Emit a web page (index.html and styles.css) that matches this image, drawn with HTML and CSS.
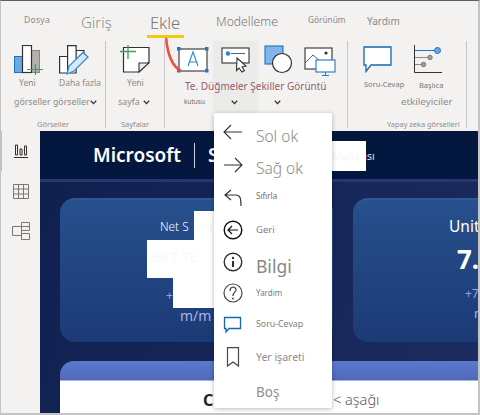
FILE: index.html
```html
<!DOCTYPE html>
<html lang="tr">
<head>
<meta charset="utf-8">
<title>Ekle</title>
<link rel="stylesheet" href="styles.css">
</head>
<body>
<div class="app">
  <nav class="tabs">
    <span class="tab tab-file">Dosya</span>
    <span class="tab tab-home">Giriş</span>
    <span class="tab tab-insert">Ekle</span>
    <span class="tab tab-model">Modelleme</span>
    <span class="tab tab-view">Görünüm</span>
    <span class="tab tab-help">Yardım</span>
  </nav>

  <section class="ribbon">
    <div class="group g-visuals">
      <div class="cmds">
        <div class="cmd c-new">
          <svg class="ic" width="32" height="31" viewBox="0 0 32 31"><rect x="17.500" y="5.500" width="8" height="22" fill="#b3b1af" stroke="#8a8886"/><rect x=".5" y="11.500" width="8" height="16" fill="#69a9e6" stroke="#1c72bd"/><rect x="8.500" y=".5" width="9" height="27" fill="#fff" stroke="#323130" stroke-width="1.200"/><path d="M13 24.500h16M21.500 19v11" stroke="#3f9b57" stroke-width="1.200" fill="none"/></svg>
          <span class="lb l-yeni">Yeni</span>
        </div>
        <div class="cmd c-more">
          <svg class="ic" width="30" height="31" viewBox="0 0 30 31"><path d="M.6 11.500h8v16.500h-8zM8.600 28V.6h8.500V28zM17 5.500h8v8" fill="#fff" stroke="#323130" stroke-width="1.200"/><path d="M8 29l2-8L24 7.500l5 4.500L15 26z" fill="#d5e7f8" stroke="#2e8fd6" stroke-width="1.300"/></svg>
          <span class="lb l-more">Daha fazla</span>
        </div>
      </div>
      <div class="lb l-vis">görseller görseller<svg class="chev" width="7" height="5" viewBox="0 0 7 5"><path d="M.8.8l2.7 2.8L6.200.8" fill="none" stroke="#323130" stroke-width="1.300"/></svg></div>
      <div class="gname">Görseller</div>
    </div>

    <div class="group g-pages">
      <svg class="ic" width="30" height="28" viewBox="0 0 30 28"><path d="M3.500 2.500H29V17L19 27H3.500z" fill="#fff" stroke="#323130" stroke-width="1.200"/><path d="M19 27v-9h10z" fill="#edebe9" stroke="#323130" stroke-width="1.100"/><path d="M0 6.500h16M8 0v14" stroke="#3f9b57" stroke-width="1.300"/></svg>
      <span class="lb l-yeni2">Yeni</span>
      <span class="lb l-page">sayfa<svg class="chev" width="7" height="5" viewBox="0 0 7 5"><path d="M.8.8l2.700 2.800L6.200.8" fill="none" stroke="#323130" stroke-width="1.300"/></svg></span>
      <div class="gname">Sayfalar</div>
    </div>

    <div class="group g-shapes">
      <div class="hover-cell"></div>
      <div class="shape-icons">
        <svg class="ic" width="32" height="26" viewBox="0 0 32 26"><rect x="2" y="2" width="28" height="22" fill="#fff" stroke="#323130" stroke-width="1.100"/><path d="M11 19l5-14 5 14M12.500 15h7" fill="none" stroke="#2f86d1" stroke-width="1.100"/><path d="M0 0h3.500v3.500H0zM28 0h3.500v3.500H28zM0 22h3.500v3.500H0zM28 22h3.500v3.500H28z" fill="#1c78c8"/></svg>
        <svg class="ic ic-btn" width="30" height="26" viewBox="0 0 30 26"><rect x="1" y="1" width="27" height="15" fill="#fff" stroke="#323130" stroke-width="1.100"/><circle cx="7" cy="6.500" r="2.300" fill="#2f86d1"/><path d="M10 6.500h14" stroke="#605e5c"/><path d="M16 11l9 8-4 1 2.500 3.500-2.500 1.500-3-4-2.500 2.500z" fill="#fff" stroke="#323130" stroke-width="1.100"/></svg>
        <svg class="ic ic-shape" width="30" height="30" viewBox="0 0 30 30"><rect x="1" y="1" width="18" height="18" fill="#7fb7ec" stroke="#1c72bd" stroke-width="1.100"/><circle cx="18" cy="18" r="9.500" fill="#fff" stroke="#323130" stroke-width="1.200"/></svg>
        <svg class="ic ic-img" width="32" height="32" viewBox="0 0 32 32"><rect x="1" y="4" width="27" height="21" fill="#fff" stroke="#323130" stroke-width="1.100"/><path d="M1 19l8-8 7 6" fill="none" stroke="#605e5c"/><circle cx="22" cy="9" r="1.600" fill="#323130"/><rect x="12" y="16" width="19" height="12" fill="#fff" stroke="#1c78c8" stroke-width="1.100"/><path d="M21.500 28v3M18 31.500h7" stroke="#1c78c8"/></svg>
      </div>
      <div class="lb l-maroon">Te. Düğmeler Şekiller Görüntü</div>
      <div class="shape-sub">
        <span class="lb l-kutusu">kutusu</span>
        <svg class="chev chev-a" width="7" height="5" viewBox="0 0 7 5"><path d="M.8.8l2.700 2.800L6.200.8" fill="none" stroke="#323130" stroke-width="1.300"/></svg>
        <svg class="chev chev-b" width="7" height="5" viewBox="0 0 7 5"><path d="M.8.8l2.700 2.800L6.200.8" fill="none" stroke="#323130" stroke-width="1.300"/></svg>
      </div>
    </div>

    <div class="group g-ai">
      <div class="cmds ai-cmds">
        <div class="cmd c-qa">
          <svg class="ic" width="29" height="27" viewBox="0 0 29 27"><path d="M1 1h27v18H8l-5 6.500V19H1z" fill="#fff" stroke="#1268b3" stroke-width="1.300"/></svg>
          <span class="lb l-qa">Soru-Cevap</span>
        </div>
        <div class="cmd c-key">
          <svg class="ic ic-key" width="30" height="28" viewBox="0 0 30 28"><path d="M.5 0v27.500H28" fill="none" stroke="#323130"/><path d="M1 5.500h22" stroke="#1c78c8"/><path d="M1 12.500h15M1 19.500h8" stroke="#8a8886"/><circle cx="23.500" cy="5.500" r="3" fill="#69a9e6" stroke="#1c72bd"/><circle cx="16" cy="12.500" r="2.200" fill="#a19f9d" stroke="#7a7876"/><circle cx="9.500" cy="19.500" r="2.200" fill="#a19f9d" stroke="#7a7876"/></svg>
          <span class="lb l-key">Başlıca</span>
        </div>
      </div>
      <div class="lb l-eff">etkileyiciler</div>
      <div class="gname gn-ai">Yapay zeka görselleri</div>
    </div>
  </section>

  <div class="body-row">
    <aside class="rail">
      <div class="rail-item is-on">
        <svg width="14" height="14" viewBox="0 0 14 14"><path d="M0 13.500h14M1.500 1v10h2V1zM6 5v6h2V5zM10.500 2v9h2V2z" fill="none" stroke="#323130"/></svg>
      </div>
      <div class="rail-item">
        <svg width="16" height="15" viewBox="0 0 16 15"><path d="M.5.500h15v14H.5zM.5 5h15M.5 10h15M5.500 .5v14M10.500 .5v14" fill="none" stroke="#7a7876"/></svg>
      </div>
      <div class="rail-item">
        <svg width="18" height="18" viewBox="0 0 18 18"><path d="M.5 4.500h9v9h-9zM9.500 .5h8v4h-8zM9.500 4.500h8v4h-8zM9.500 11.500h8v6h-8z" fill="none" stroke="#7a7876"/></svg>
      </div>
    </aside>

    <main class="canvas">
      <header class="report-head">
        <span class="brand">Microsoft</span>
        <span class="brand-sep"></span>
        <span class="brand brand-s">S</span>
        <span class="store">ası</span>
      </header>
      <div class="report-band"></div>
      <div class="kpis">
        <article class="kpi kpi-a">
          <div class="k-title">Net S</div>
          <div class="k-delta">+</div>
          <div class="k-sub">m/m</div>
        </article>
        <article class="kpi kpi-b">
          <div class="k-title">Unit</div>
          <div class="k-value">7.</div>
          <div class="k-delta">+7</div>
          <div class="k-sub">m</div>
        </article>
      </div>
      <section class="panel">
        <div class="panel-bar"></div>
        <div class="panel-body">
          <span class="panel-c">C</span>
          <span class="panel-down">&lt; aşağı</span>
        </div>
      </section>
    </main>
  </div>

  <!-- Over the content: redaction blocks, annotation stroke and the open menu -->
  <div class="mask m1"><span>atış</span></div>
  <div class="mask m2"><span>387 TL</span></div>
  <div class="mask m3"></div>
  <div class="mask m4"><span>Mağa</span></div>
  <svg class="swoosh" width="18" height="40" viewBox="0 0 18 40"><path d="M1 0c1 12 4 28 15 34" fill="none" stroke="#e8503f" stroke-width="2.600"/></svg>
  <div class="tab-underline"></div>

  <div class="menu">
    <div class="row"><svg width="20" height="16" viewBox="0 0 20 16"><path d="M19 8H1M8 1L1 8l7 7" fill="none" stroke="#323130" stroke-width="1.100"/></svg><span class="t t-sol">Sol ok</span></div>
    <div class="row"><svg width="20" height="16" viewBox="0 0 20 16"><path d="M1 8h18M12 1l7 7-7 7" fill="none" stroke="#323130" stroke-width="1.100"/></svg><span class="t t-sag">Sağ ok</span></div>
    <div class="row"><svg width="20" height="17" viewBox="0 0 20 17"><path d="M8 1L2 6l6 5M2 6h11c4 0 5 3 5 11" fill="none" stroke="#323130" stroke-width="1.200"/></svg><span class="t t-res">Sıfırla</span></div>
    <div class="row"><svg width="20" height="20" viewBox="0 0 20 20"><circle cx="10" cy="10" r="8.800" fill="none" stroke="#111" stroke-width="1.400"/><path d="M15 10H5M9 6l-4 4 4 4" fill="none" stroke="#111" stroke-width="1.200"/></svg><span class="t t-geri">Geri</span></div>
    <div class="row"><svg width="20" height="20" viewBox="0 0 20 20"><circle cx="10" cy="10" r="8.800" fill="none" stroke="#323130" stroke-width="1.400"/><path d="M10 9v6" stroke="#323130" stroke-width="2"/><circle cx="10" cy="6" r="1.200" fill="#323130"/></svg><span class="t t-bilgi">Bilgi</span></div>
    <div class="row row-help"><svg width="20" height="20" viewBox="0 0 20 20"><circle cx="10" cy="10" r="9" fill="none" stroke="#4a4846" stroke-width="1.200"/><path d="M7 8c0-5 6-5 6-1 0 2-3 2-3 6" fill="none" stroke="#4a4846" stroke-width="1.300"/><circle cx="10" cy="15.500" r="1" fill="#4a4846"/></svg><span class="t t-help">Yardım</span></div>
    <div class="row row-up"><svg width="20" height="18" viewBox="0 0 20 18"><path d="M1.500 1.500h16v11H6l-3 3.500v-3.500H1.500z" fill="#fff" stroke="#1268b3" stroke-width="1.300"/></svg><span class="t t-qa">Soru-Cevap</span></div>
    <div class="row row-up"><svg width="20" height="20" viewBox="0 0 20 20"><path d="M4.500 .6h11v18.500l-5.500-4-5.500 4z" fill="#fff" stroke="#4a4846" stroke-width="1.200"/></svg><span class="t t-mark">Yer işareti</span></div>
    <div class="row"><span class="t t-bos">Boş</span></div>
  </div>
</div>
</body>
</html>
```

FILE: styles.css
```css
* { box-sizing: border-box; }
html, body { margin: 0; padding: 0; }
body { width: 480px; height: 415px; overflow: hidden; background: #fff; font-family: "Noto Sans", "Open Sans", "Liberation Sans", sans-serif; }

.app { position: relative; width: 480px; height: 415px; overflow: hidden; display: flex; flex-direction: column; border-top: 1px solid #5f5f5f; border-left: 1px solid #c4c4c4; border-right: 2px solid #c4c4c4; border-bottom: 2px solid #c4c4c4; background: #f3f2f1; }

/* tabs */
.tabs { height: 40px; flex: none; display: flex; align-items: center; background: #f3f2f1; color: #8a8886; padding-left: 23px; }
.tab { display: block; line-height: 1; white-space: nowrap; }
.tab-file { font-size: 8.500px; width: 57px; letter-spacing: .3px; margin-top: -1px; }
.tab-home { font-size: 15px; width: 69px; font-weight: 300; color: #8d8b89; margin-top: 2px; }
.tab-insert { font-size: 16.500px; width: 66px; font-weight: 300; color: #797775; margin-top: 4px; }
.tab-model { font-size: 12.200px; width: 92px; font-weight: 300; color: #77757a; margin-top: 2px; }
.tab-view { font-size: 8.300px; width: 59px; color: #8a8886; margin-top: -1px; }
.tab-help { font-size: 10px; color: #8a8886; margin-top: -1px; }
.tab-underline { position: absolute; left: 146px; top: 34px; width: 37px; height: 3px; background: #f2c811; }
.swoosh { position: absolute; left: 164px; top: 36px; }

/* ribbon */
.ribbon { height: 90px; flex: none; display: flex; background: #f3f2f1; }
.group { position: relative; flex: none; height: 87px; border-right: 1px solid #c8c6c4; }
.lb { display: block; color: #8c8a88; white-space: nowrap; line-height: 12px; }
.gname { position: absolute; bottom: -1px; left: 0; right: 0; text-align: center; color: #8f8d8b; font-size: 7.500px; line-height: 10px; }
.ic { display: block; flex: none; }
.chev { flex: none; }
.cmds { display: flex; }
.cmd { display: flex; flex-direction: column; }

.g-visuals { width: 105px; padding: 4px 0 0 13px; }
.c-new { width: 45px; }
.l-yeni { font-size: 8.500px; margin: 1px 0 0 5px; }
.c-more { width: 46px; }
.l-more { font-size: 8.500px; margin: 1px 0 0 0; }
.l-vis { font-size: 8.800px; margin-top: 7px; display: flex; align-items: center; }
.g-pages { width: 59px; padding: 4px 0 0 14px; }
.l-yeni2 { font-size: 8.500px; margin: 4px 0 0 7px; }
.l-page { font-size: 8.800px; margin: 7px 0 0 -2px; display: flex; align-items: center; gap: 3px; }
.g-shapes { width: 183px; }
.hover-cell { position: absolute; left: 48px; top: 0; width: 45px; height: 72px; background: #ebebea; }
.shape-icons { position: relative; display: flex; align-items: flex-start; padding: 6px 0 0 12px; height: 38px; }
.ic-btn { margin-left: 12px; }
.ic-shape { margin-left: 13px; margin-top: -2px; }
.ic-img { margin-left: 10px; margin-top: -3px; }
.l-maroon { position: relative; font-size: 10px; color: #95606a; padding-left: 20px; margin-top: 1px; }
.shape-sub { position: relative; display: flex; align-items: center; margin-top: 4px; padding-left: 19px; }
.l-kutusu { font-size: 6.500px; color: #6f6d6b; width: 47px; }
.chev-b { margin-left: 36px; }
.g-ai { width: 119px; }
.ai-cmds { padding: 5px 0 0 15px; }
.c-qa { width: 51px; }
.l-qa { font-size: 7.500px; margin: 5px 0 0 1px; color: #7a7876; }
.c-key { width: 40px; }
.ic-key { margin-top: -1px; }
.l-key { font-size: 7.500px; margin: 6px 0 0 5px; color: #7a7876; }
.l-eff { font-size: 9.800px; margin: 5px 0 0 53px; color: #8f8d8b; }
.gn-ai { text-align: left; padding-left: 39px; font-size: 7.400px; }

/* body */
.body-row { flex: 1; display: flex; min-height: 0; }
.rail { width: 39px; flex: none; background: #f3f2f1; display: flex; flex-direction: column; }
.rail-item { height: 40px; display: flex; align-items: center; justify-content: center; }
.rail-item.is-on { border-left: 1px solid #f2c811; }

.canvas { flex: 1; min-width: 0; display: flex; flex-direction: column; background: linear-gradient(120deg, #0f1f4e, #1c2c60); overflow: hidden; }
.report-head { height: 48px; flex: none; display: flex; align-items: center; background: #04183f; padding-left: 53px; color: #fff; }
.brand { font-size: 19px; font-weight: 600; line-height: 1; }
.brand-sep { width: 1px; height: 25px; background: #c9cfdb; margin: 0 13px; }
.brand-s { width: 153px; flex: none; }
.store { font-size: 10.500px; color: #dfe4f0; line-height: 1; padding-top: 3px; }
.report-band { height: 3px; flex: none; background: #26366f; }
.kpis { display: flex; gap: 20px; padding: 16px 0 0 20px; }
.kpi { flex: none; width: 273px; height: 144px; border-radius: 15px; background: linear-gradient(180deg, #27508c, #1c3a76); border-top: 2px solid #2b5a94; color: #fff; }
.k-title { font-size: 11.500px; line-height: 14px; white-space: nowrap; }
.k-value { font-size: 26px; font-weight: 700; line-height: 30px; margin: 8px 0 0 8px; color: #fff; }
.k-delta { font-size: 12px; color: #8ea6dd; line-height: 14px; white-space: nowrap; }
.k-sub { font-size: 14px; color: #a3b6e6; line-height: 14px; margin-top: 6px; }
.kpi-a { padding: 19px 0 0 100px; }
.kpi-a .k-title { font-size: 11.800px; font-weight: 300; }
.kpi-a .k-delta { margin: 56px 0 0 6px; }
.kpi-a .k-sub { margin-left: 20px; }
.kpi-b { padding: 16px 0 0 96px; }
.kpi-b .k-title { font-size: 15.500px; line-height: 20px; }
.kpi-b .k-delta { margin: 13px 0 0 16px; }
.kpi-b .k-sub { margin-left: 25px; font-size: 12.500px; }
.panel { margin: 19px 0 0 20px; flex: 1; display: flex; flex-direction: column; min-height: 0; }
.panel-bar { height: 20px; flex: none; border-radius: 14px 0 0 0; background: linear-gradient(180deg, #5b79cf, #5068b8); border-bottom: 1px solid #a9b4d6; }
.panel-body { flex: 1; background: #fff; display: flex; align-items: center; padding: 5px 0 0 143px; }
.panel-c { font-size: 16px; font-weight: 700; color: #222; line-height: 1; width: 130px; }
.panel-down { font-size: 14.500px; color: #605e5c; line-height: 1; font-weight: 300; }

/* over-content blocks */
.mask { position: absolute; background: #fff; color: #f8f8f8; line-height: 1; }
.mask span { position: absolute; white-space: nowrap; }
.m1 { left: 193px; top: 210px; width: 30px; height: 30px; }
.m1 span { left: 0; top: 9px; font-size: 11.500px; }
.m2 { left: 146px; top: 239px; width: 70px; height: 38px; }
.m2 span { left: 5px; top: 9px; font-size: 15px; }
.m3 { left: 172px; top: 277px; width: 44px; height: 30px; }
.m4 { left: 219px; top: 140px; width: 146px; height: 30px; }
.m4 span { left: 112px; top: 10px; font-size: 10.500px; color: #f6f6f6; }

/* menu */
.menu { position: absolute; left: 213px; top: 112px; width: 118px; height: 295px; background: #fff; border-radius: 2px; box-shadow: 0 1px 5px rgba(0,0,0,.28); padding: 3px 0 0 9px; display: flex; flex-direction: column; }
.row { height: 32.500px; flex: none; display: flex; align-items: center; }
.row svg { width: 20px; flex: none; }
.row-up svg { margin-top: -5px; }
.row-help svg { margin-top: -3px; }
.t { color: #8a8886; line-height: 1; white-space: nowrap; margin-left: 13px; }
.t-sol { font-size: 15.500px; font-weight: 300; color: #8a8886; padding-top: 9px; }
.t-sag { font-size: 15.500px; font-weight: 300; color: #8a8886; padding-top: 7px; }
.t-res { font-size: 8px; color: #6f6d6b; padding-bottom: 3px; }
.t-geri { font-size: 9.500px; color: #807e7c; }
.t-bilgi { font-size: 17.500px; font-weight: 400; color: #8a8886; padding-top: 8px; }
.t-help { font-size: 8px; color: #807e7c; padding-bottom: 3px; }
.t-qa { font-size: 8.800px; color: #807e7c; padding-bottom: 6px; }
.t-mark { font-size: 10.500px; color: #8f8d8b; padding-bottom: 5px; }
.t-bos { font-size: 13.500px; color: #928f8d; margin-left: 33px; }
```
